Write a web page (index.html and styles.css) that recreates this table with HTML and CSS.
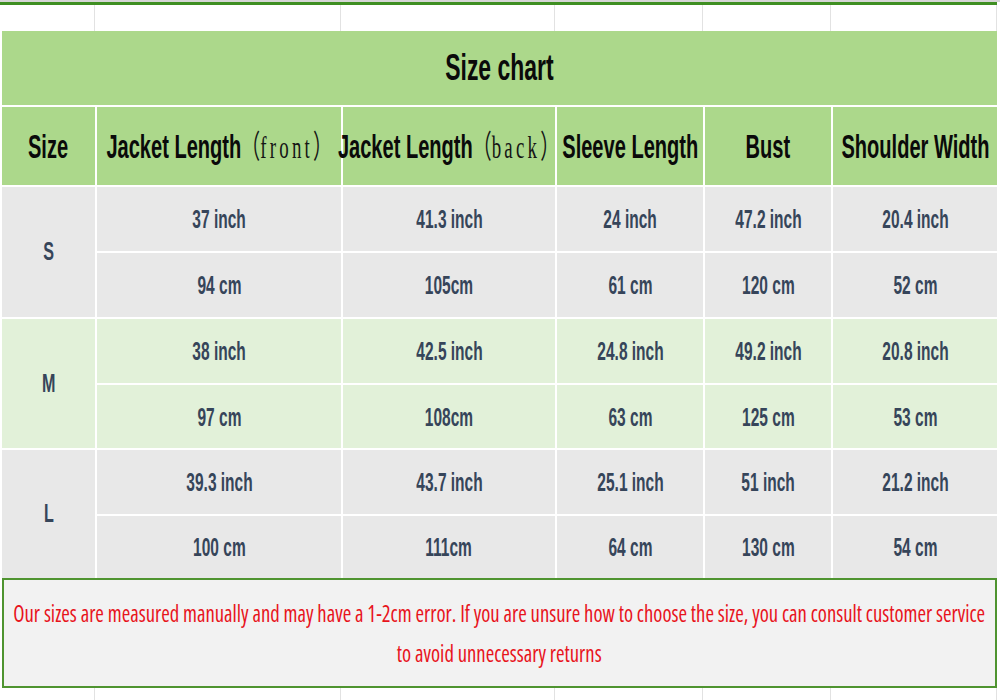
FILE: index.html
```html
<!DOCTYPE html>
<html lang="en">
<head>
<meta charset="utf-8">
<title>Size chart</title>
<link rel="stylesheet" href="styles.css">
</head>
<body>
<div class="page">
  <div class="topline"></div>
  <div class="greenline"></div>
  <div class="sheet-row">
    <span></span><span></span><span></span><span></span><span></span><span></span>
  </div>
  <div class="chart">
    <div class="title"><span class="nx">Size chart</span></div>

    <div class="head"><span class="nx">Size</span></div>
    <div class="head"><span class="nx">Jacket Length<span class="paren">（<span class="pl">front</span>）</span></span></div>
    <div class="head"><span class="nx">Jacket Length<span class="paren">（<span class="pl">back</span>）</span></span></div>
    <div class="head"><span class="nx">Sleeve Length</span></div>
    <div class="head"><span class="nx">Bust</span></div>
    <div class="head"><span class="nx">Shoulder Width</span></div>

    <div class="size grey"><span class="nx">S</span></div>
    <div class="cell grey"><span class="nx">37 inch</span></div>
    <div class="cell grey"><span class="nx">41.3 inch</span></div>
    <div class="cell grey"><span class="nx">24 inch</span></div>
    <div class="cell grey"><span class="nx">47.2 inch</span></div>
    <div class="cell grey"><span class="nx">20.4 inch</span></div>
    <div class="cell grey"><span class="nx">94 cm</span></div>
    <div class="cell grey"><span class="nx">105cm</span></div>
    <div class="cell grey"><span class="nx">61 cm</span></div>
    <div class="cell grey"><span class="nx">120 cm</span></div>
    <div class="cell grey"><span class="nx">52 cm</span></div>

    <div class="size mint"><span class="nx">M</span></div>
    <div class="cell mint"><span class="nx">38 inch</span></div>
    <div class="cell mint"><span class="nx">42.5 inch</span></div>
    <div class="cell mint"><span class="nx">24.8 inch</span></div>
    <div class="cell mint"><span class="nx">49.2 inch</span></div>
    <div class="cell mint"><span class="nx">20.8 inch</span></div>
    <div class="cell mint"><span class="nx">97 cm</span></div>
    <div class="cell mint"><span class="nx">108cm</span></div>
    <div class="cell mint"><span class="nx">63 cm</span></div>
    <div class="cell mint"><span class="nx">125 cm</span></div>
    <div class="cell mint"><span class="nx">53 cm</span></div>

    <div class="size grey"><span class="nx">L</span></div>
    <div class="cell grey"><span class="nx">39.3 inch</span></div>
    <div class="cell grey"><span class="nx">43.7 inch</span></div>
    <div class="cell grey"><span class="nx">25.1 inch</span></div>
    <div class="cell grey"><span class="nx">51 inch</span></div>
    <div class="cell grey"><span class="nx">21.2 inch</span></div>
    <div class="cell grey"><span class="nx">100 cm</span></div>
    <div class="cell grey"><span class="nx">111cm</span></div>
    <div class="cell grey"><span class="nx">64 cm</span></div>
    <div class="cell grey"><span class="nx">130 cm</span></div>
    <div class="cell grey"><span class="nx">54 cm</span></div>
  </div>
  <div class="note">
    <p>Our sizes are measured manually and may have a 1-2cm error. If you are unsure how to choose the size, you can consult customer service<br>to avoid unnecessary returns</p>
  </div>
  <div class="sheet-row bottom">
    <span></span><span></span><span></span><span></span><span></span><span></span>
  </div>
</div>
</body>
</html>
```

FILE: styles.css
```css
html, body {
  margin: 0;
  padding: 0;
  background: #ffffff;
}

.page {
  width: 1000px;
  height: 700px;
  overflow: hidden;
  font-family: "Liberation Sans", Arial, sans-serif;
}

.topline {
  height: 2px;
  background: #d6d6d6;
}

.greenline {
  height: 3px;
  width: 997px;
  background: #3f8f22;
}

.sheet-row {
  display: grid;
  grid-template-columns: 95px 246px 214px 148px 128px 166px;
  height: 26px;
}

.sheet-row span {
  border-right: 1px solid #e2e2e2;
}

.sheet-row.bottom {
  height: 12px;
}

.chart {
  display: grid;
  grid-template-columns: 93px 244px 212px 146px 126px 164px;
  grid-template-rows: 74px 78px 64px 64px 64px 63px 64px 62px;
  gap: 2px;
  padding-left: 2px;
  width: 995px;
  background: #ffffff;
}

.nx {
  display: inline-block;
  flex: none;
  white-space: nowrap;
  font-weight: bold;
  line-height: 1.15;
}

.title {
  grid-column: 1 / -1;
  background: #acd88b;
  display: flex;
  align-items: center;
  justify-content: center;
  font-size: 37px;
  color: #0a0a0a;
}

.title .nx {
  transform: scaleX(0.62);
}

.head {
  background: #acd88b;
  display: flex;
  align-items: center;
  justify-content: center;
  font-size: 34px;
  color: #0a0a0a;
  white-space: nowrap;
  padding-top: 1px;
}

.head .nx {
  transform: scaleX(0.59);
}

.paren {
  font-family: "Noto Sans CJK SC", "Liberation Serif", serif;
  font-weight: normal;
  font-size: 32px;
  line-height: 1;
  color: #151515;
}

.pl {
  font-family: "Liberation Serif", serif;
  letter-spacing: 5.5px;
}

.size {
  grid-row: span 2;
  display: flex;
  align-items: center;
  justify-content: center;
  font-size: 26px;
  color: #36455a;
}

.cell {
  display: flex;
  align-items: center;
  justify-content: center;
  font-size: 25px;
  color: #36455a;
  padding-top: 1px;
}

.size .nx,
.cell .nx {
  transform: scaleX(0.62);
}

.grey { background: #e8e8e8; }
.mint { background: #e2f1d9; }

.note {
  width: 991px;
  height: 106px;
  margin-left: 2px;
  border: 2px solid #4f9430;
  background: #f2f2f2;
  display: flex;
  align-items: center;
  justify-content: center;
}

.note p {
  margin: 0;
  flex: none;
  font-family: "Open Sans", "Noto Sans", sans-serif;
  font-stretch: 75%;
  font-size: 23.5px;
  line-height: 40px;
  color: #e8141c;
  text-align: center;
  white-space: nowrap;
  transform: scaleX(0.88);
}
```
